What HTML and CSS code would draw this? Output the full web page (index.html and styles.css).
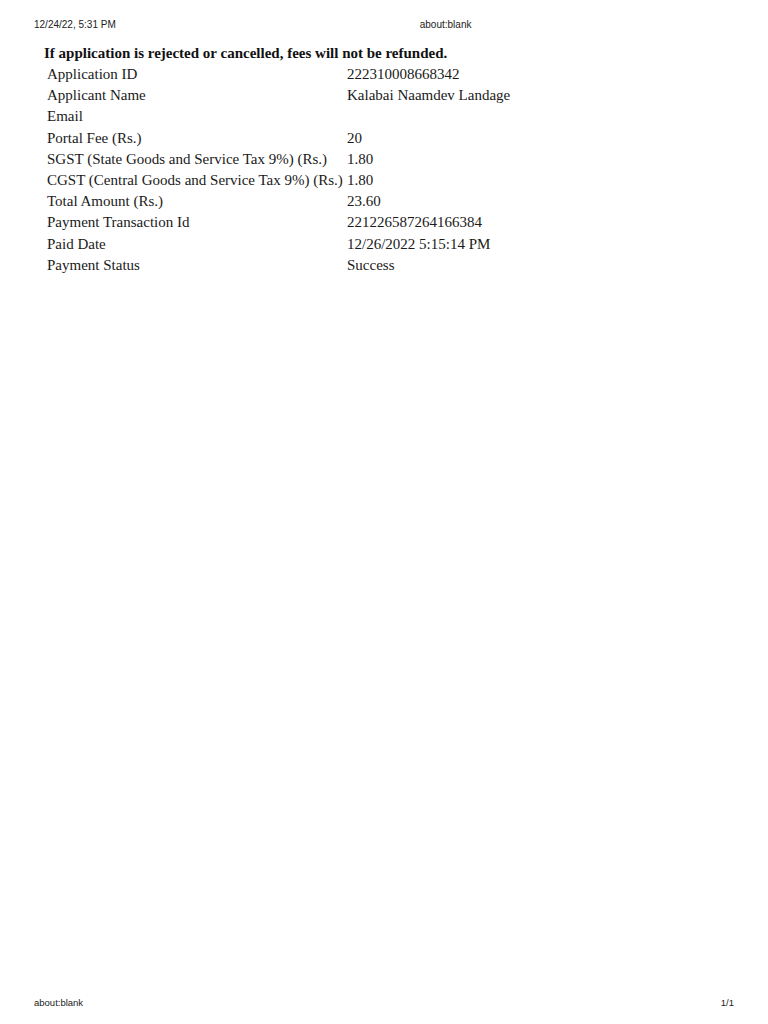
FILE: index.html
```html
<!DOCTYPE html>
<html>
<head>
<meta charset="utf-8">
<link rel="stylesheet" href="styles.css">
</head>
<body>
<div class="page">
  <header class="print-head">
    <span class="date">12/24/22, 5:31 PM</span>
    <span class="title">about:blank</span>
  </header>
  <main class="content">
    <h1 class="notice">If application is rejected or cancelled, fees will not be refunded.</h1>
    <div class="details">
      <div class="label">Application ID</div><div class="value">222310008668342</div>
      <div class="label">Applicant Name</div><div class="value">Kalabai Naamdev Landage</div>
      <div class="label">Email</div><div class="value"></div>
      <div class="label">Portal Fee (Rs.)</div><div class="value">20</div>
      <div class="label">SGST (State Goods and Service Tax 9%) (Rs.)</div><div class="value">1.80</div>
      <div class="label">CGST (Central Goods and Service Tax 9%) (Rs.)</div><div class="value">1.80</div>
      <div class="label">Total Amount (Rs.)</div><div class="value">23.60</div>
      <div class="label">Payment Transaction Id</div><div class="value">221226587264166384</div>
      <div class="label">Paid Date</div><div class="value">12/26/2022 5:15:14 PM</div>
      <div class="label">Payment Status</div><div class="value">Success</div>
    </div>
  </main>
  <footer class="print-foot">
    <span class="url">about:blank</span>
    <span class="pages">1/1</span>
  </footer>
</div>
</body>
</html>
```
FILE: styles.css
```css
html, body {
  margin: 0;
  padding: 0;
  background: #fff;
}
.page {
  width: 768px;
  height: 1024px;
  display: flex;
  flex-direction: column;
  color: #111;
}
.print-head {
  display: flex;
  padding: 18px 0 0 34px;
  height: 14px;
  font-family: "Liberation Sans", Arial, sans-serif;
  font-size: 10px;
  line-height: 14px;
  color: #222;
}
.print-head .title {
  margin-left: 304px;
}
.content {
  flex: 1;
  padding: 11px 0 0 44px;
}
.notice {
  margin: 0 0 1px 0;
  font-family: "Liberation Serif", "Times New Roman", serif;
  font-weight: bold;
  font-size: 15px;
  line-height: 20px;
  color: #111;
}
.details {
  display: grid;
  grid-template-columns: 300px auto;
  padding-left: 3px;
  font-family: "Liberation Serif", "Times New Roman", serif;
  font-size: 15px;
  line-height: 21.2px;
  color: #1a1a1a;
}
.print-foot {
  display: flex;
  justify-content: space-between;
  padding: 0 34px 14px 34px;
  height: 14px;
  font-family: "Liberation Sans", Arial, sans-serif;
  font-size: 9.5px;
  line-height: 14px;
  color: #222;
}
```
